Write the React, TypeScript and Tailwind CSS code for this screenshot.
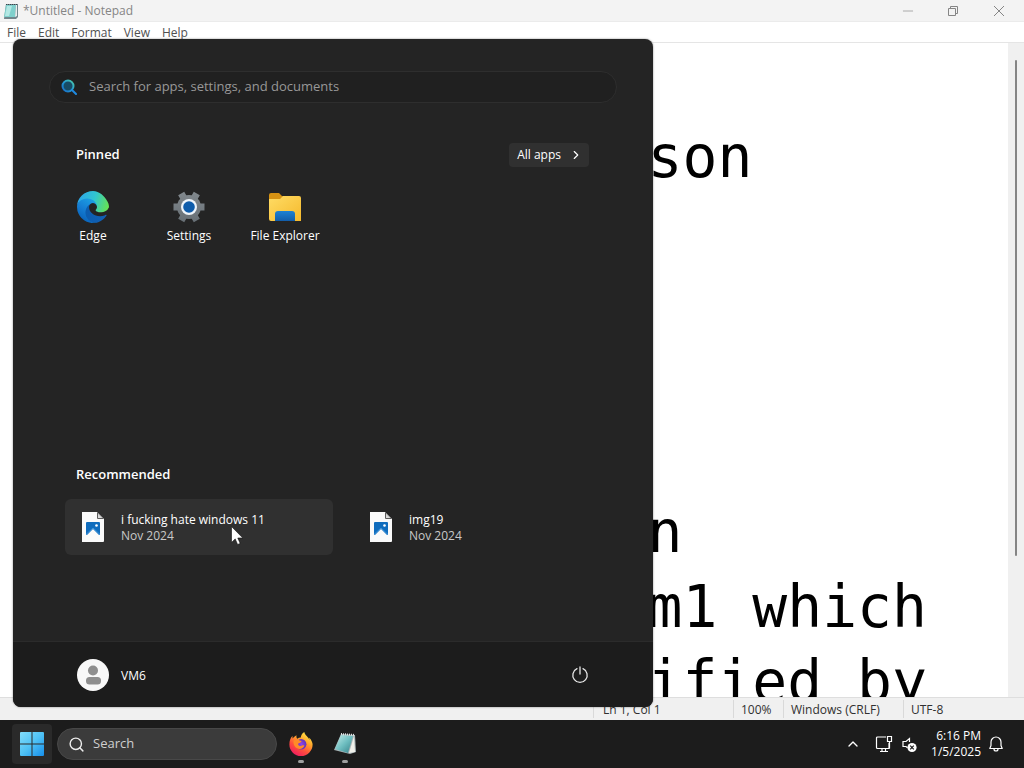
import { ChevronRight, ChevronUp, Minus, Search } from 'lucide-react';

const menus = ['File', 'Edit', 'Format', 'View', 'Help'];

const indent = ' '.repeat(18);
const note = ['', `${indent}son`, '', '', '', '', `${indent}n`, `${indent}m1 which`, `${indent}ified by`].join('\n');

const pinned = [
  { name: 'Edge', icon: EdgeIcon },
  { name: 'Settings', icon: SettingsIcon },
  { name: 'File Explorer', icon: FolderIcon },
];

const recommended = [
  { name: 'i fucking hate windows 11', date: 'Nov 2024', active: true },
  { name: 'img19', date: 'Nov 2024', active: false },
];

function EdgeIcon() {
  return (
    <svg viewBox="4.6 4.9 256 256" className="size-8">
      <defs>
        <linearGradient id="edge-dark" x1="63" y1="178" x2="241" y2="178" gradientUnits="userSpaceOnUse">
          <stop offset="0" stopColor="#0b5cae" />
          <stop offset="1" stopColor="#1260b4" />
        </linearGradient>
        <linearGradient id="edge-blue" x1="140" y1="90" x2="50" y2="230" gradientUnits="userSpaceOnUse">
          <stop offset="0" stopColor="#1b9de2" />
          <stop offset="0.5" stopColor="#1680d5" />
          <stop offset="1" stopColor="#0a66bd" />
        </linearGradient>
        <linearGradient id="edge-green" x1="20" y1="60" x2="250" y2="135" gradientUnits="userSpaceOnUse">
          <stop offset="0" stopColor="#2da9e8" />
          <stop offset="0.5" stopColor="#31c6cf" />
          <stop offset="1" stopColor="#65e255" />
        </linearGradient>
      </defs>
      <path
        fill="url(#edge-dark)"
        d="M235.68 195.46a93.73 93.73 0 0 1-10.54 4.71 101.87 101.87 0 0 1-35.9 6.46c-47.32 0-88.54-32.55-88.54-74.32A31.48 31.48 0 0 1 117.13 105c-42.8 1.8-53.8 46.4-53.8 72.53 0 73.88 68.09 81.37 82.76 81.37 7.91 0 19.84-2.3 27-4.56l1.31-.44a128.34 128.34 0 0 0 66.6-52.8 4 4 0 0 0-5.32-5.64z"
      />
      <path
        fill="url(#edge-blue)"
        d="M110.34 246.34A79.2 79.2 0 0 1 87.6 225a80.72 80.72 0 0 1 29.53-120c3.12-1.47 8.45-4.13 15.54-4a32.35 32.35 0 0 1 25.69 13 31.88 31.88 0 0 1 6.36 18.66c0-.21 24.46-79.6-80-79.6-43.9 0-80 41.66-80 78.21a130.15 130.15 0 0 0 12.11 56 128 128 0 0 0 156.38 67.11 75.55 75.55 0 0 1-62.78-8z"
      />
      <path
        fill="url(#edge-green)"
        d="M156.94 153.78c-.81 1.05-3.3 2.5-3.3 5.66 0 2.61 1.7 5.12 4.72 7.23 14.38 10 41.49 8.68 41.56 8.68a59.56 59.56 0 0 0 30.27-8.35A61.38 61.38 0 0 0 260.63 133.9c.26-22.41-8-37.31-11.34-43.91-21.19-41.44-66.93-85.07-116.67-85.07a128 128 0 0 0-128 126.2c.48-36.54 36.8-66.05 80-66.05 3.5 0 23.46.34 42 10.07 16.34 8.58 24.9 18.94 30.85 29.21 6.18 10.67 7.28 24.15 7.28 29.52s-2.74 13.4-7.8 19.91z"
      />
    </svg>
  );
}

function SettingsIcon() {
  return (
    <svg viewBox="0 0 32 32" className="size-8">
      <defs>
        <linearGradient id="gear" x1="0" y1="0" x2="0" y2="32" gradientUnits="userSpaceOnUse">
          <stop offset="0" stopColor="#82898e" />
          <stop offset="1" stopColor="#666e74" />
        </linearGradient>
      </defs>
      <g stroke="url(#gear)" strokeWidth="7">
        <path d="M.5 15.900L31.500 16.100M8.200 2.600l15.600 26.800M23.800 2.600L8.200 29.400" />
      </g>
      <circle cx="16" cy="16" r="12" fill="url(#gear)" />
      <circle cx="16" cy="16" r="8" fill="#eef4fa" />
      <circle cx="16" cy="16" r="5.800" fill="#0e5cab" />
    </svg>
  );
}

function FolderIcon() {
  return (
    <svg viewBox="0 0 32 32" className="size-8">
      <defs>
        <linearGradient id="folder" x1="0" y1="0" x2="1" y2="1">
          <stop offset="0" stopColor="#ffdc65" />
          <stop offset="1" stopColor="#f5b92c" />
        </linearGradient>
        <linearGradient id="folder-dock" x1="0" y1="0" x2="0" y2="1">
          <stop offset="0" stopColor="#1c82d4" />
          <stop offset="1" stopColor="#125da9" />
        </linearGradient>
      </defs>
      <path d="M0 10V4a2 2 0 0 1 2-2h8l3 3h1l-1 5z" fill="#d69213" />
      <path d="M0 8h11l3-3h16a2 2 0 0 1 2 2v23H2a2 2 0 0 1-2-2z" fill="url(#folder)" />
      <path d="M6 30v-7a3 3 0 0 1 3-3h14a3 3 0 0 1 3 3v7z" fill="url(#folder-dock)" />
    </svg>
  );
}

function ImageFileIcon() {
  return (
    <svg viewBox="0 0 24 30" className="h-[30px] w-6 shrink-0">
      <path d="M1 0h15l7 7v22a1 1 0 0 1-1 1H1z" fill="#fafafa" />
      <path d="M16 0v6a1 1 0 0 0 1 1h6z" fill="#5b5b5b" />
      <path d="M17 1.500v4.500h4.500z" fill="#d8d8d8" />
      <rect x="5" y="10" width="14" height="13" rx="1" fill="#0f6cbd" />
      <path d="M6 23l6-6 6 6z" fill="#fafafa" />
      <path d="M5 22.500l7-6.500 7 6.500" fill="none" stroke="#3d94dc" strokeWidth="1" />
      <circle cx="15.500" cy="13.500" r="1.300" fill="#fff" />
    </svg>
  );
}

function NotepadIcon() {
  return (
    <svg viewBox="0 0 24 24" className="size-6">
      <defs>
        <linearGradient id="pad" x1="0" y1="0" x2="1" y2="1">
          <stop offset="0" stopColor="#c4ece9" />
          <stop offset="0.5" stopColor="#6fbfc1" />
          <stop offset="1" stopColor="#357f88" />
        </linearGradient>
      </defs>
      <path d="M8 2l14 1 1 17-6 2-16-4z" fill="#a9b4b6" />
      <path d="M8 3l12 1-5 17-13-4z" fill="url(#pad)" />
      <path d="M21 4l1 16-6 1z" fill="#f0f0ea" />
      <path d="M8 2l14 1" stroke="#dfe5e6" strokeWidth="2" strokeDasharray="1 1" />
    </svg>
  );
}

function NotepadSmallIcon() {
  return (
    <svg viewBox="0 0 16 16" className="size-4">
      <path d="M3 1h12v13l-2 2H1z" fill="#71868c" />
      <path d="M3 2h10l-1 12H1z" fill="#7fd0cc" />
      <path d="M4 3h5L6 13H2z" fill="#b3e8e4" />
      <path d="M13 2h1v11l-2 1z" fill="#e8eeee" />
      <path d="M3 1.500h12" stroke="#39464c" strokeWidth="1" strokeDasharray="1 1" />
    </svg>
  );
}

function FirefoxIcon() {
  return (
    <svg viewBox="0 0 24 24" className="size-6">
      <defs>
        <linearGradient id="fox" x1="0.8" y1="0" x2="0.2" y2="1">
          <stop offset="0" stopColor="#fff04a" />
          <stop offset="0.35" stopColor="#ffa42b" />
          <stop offset="0.65" stopColor="#ff4f3c" />
          <stop offset="1" stopColor="#ee1565" />
        </linearGradient>
        <radialGradient id="fox-globe">
          <stop offset="0" stopColor="#8d46ee" />
          <stop offset="1" stopColor="#6333b9" />
        </radialGradient>
      </defs>
      <path
        d="M22.800 9.500c-.6-1.700-2-3.400-3.100-4 .6 1 .9 2 1 2.800-1.400-3.600-4.800-4.800-5.400-8.300-2.700 1.500-3.400 4-3.500 5.500-1.300.1-2.500.5-3.500 1.200-1-.9-1-2.600-.8-3.500-1.600.8-2.900 2-3.700 3.300-.4-.6-.4-2-.2-2.700C1.400 5.600.4 9 .4 12.500a11.600 11.500 0 0 0 23.200 0c0-1-.3-2.100-.8-3z"
        fill="url(#fox)"
      />
      <circle cx="12.200" cy="12.300" r="5.200" fill="url(#fox-globe)" />
      <path d="M4.500 9c1.300-1.700 3.500-2 5-1.300 1 .6 1.600 1 3.100 1.200-.3 1.600-1.800 1.800-2.900 2.300-.9.500-.6 1.700.2 2.300 2.500 1.500 3.500-1 5.500.1-1 2.700-3.500 4-6.200 3.200-3.100-.9-5-4-4.700-7.800z" fill="#ff8b27" />
    </svg>
  );
}

function MenuSearchIcon() {
  return (
    <svg viewBox="0 0 16 16" className="size-4" fill="none" strokeWidth="2">
      <defs>
        <linearGradient id="lens" x1="0" y1="1" x2="1" y2="0">
          <stop offset="0" stopColor="#1769c5" />
          <stop offset="0.5" stopColor="#239bd5" />
          <stop offset="1" stopColor="#4dc7a3" />
        </linearGradient>
      </defs>
      <circle cx="7" cy="7" r="5.500" stroke="url(#lens)" fill="#174b65" />
      <path d="M11 11l4 4" stroke="#1f8ae0" strokeLinecap="round" />
    </svg>
  );
}

function StartIcon() {
  return (
    <svg viewBox="0 0 24 24" className="size-6">
      <defs>
        <linearGradient id="win" x1="0" y1="0" x2="24" y2="24" gradientUnits="userSpaceOnUse">
          <stop offset="0" stopColor="#82dcf9" />
          <stop offset="0.5" stopColor="#4fc2f5" />
          <stop offset="1" stopColor="#168eea" />
        </linearGradient>
      </defs>
      <path d="M1 0h10.500v11.500H0V1a1 1 0 0 1 1-1zM12.500 0H23a1 1 0 0 1 1 1v10.500H12.500zM0 12.500h11.500V24H1a1 1 0 0 1-1-1zM12.500 12.500H24V23a1 1 0 0 1-1 1H12.500z" fill="url(#win)" />
    </svg>
  );
}

function Cursor() {
  return (
    <svg viewBox="0 0 12 19" className="absolute left-[166px] top-[27px] h-[19px] w-3">
      <path d="M.5.500v16l3.700-3.600 2.400 5.600 2.600-1.100-2.400-5.400h5z" fill="#fff" stroke="#111" strokeWidth=".6" />
    </svg>
  );
}

function Notepad() {
  return (
    <main className="flex min-h-0 flex-1 flex-col bg-white text-xs">
      <header className="flex h-[22px] shrink-0 items-center border-b border-[#ebebeb] bg-[#f3f3f3] pl-[3px] pr-[2px] text-[#858585]">
        <NotepadSmallIcon />
        <h1 className="ml-1 flex-1 pt-px">*Untitled - Notepad</h1>
        <button aria-label="Minimize" className="flex h-5 w-[45px] items-center justify-center">
          <Minus className="size-4" strokeWidth={1} />
        </button>
        <button aria-label="Restore" className="flex h-5 w-[45px] items-center justify-center">
          <svg viewBox="0 0 12 12" className="size-3" fill="none" stroke="currentColor">
            <path d="M1.500 3.500h7v7h-7zM3.500 3V1.500h7v7H9" />
          </svg>
        </button>
        <button aria-label="Close" className="flex h-5 w-[47px] items-center justify-center">
          <svg viewBox="0 0 12 12" className="size-3" fill="none" stroke="currentColor">
            <path d="M1 1l10 10M11 1L1 11" />
          </svg>
        </button>
      </header>
      <nav className="flex h-[21px] shrink-0 items-center gap-3 border-b border-[#e5e5e5] pl-[7px] pt-[2px] text-[#505050]">
        {menus.map((menu) => (
          <button key={menu}>{menu}</button>
        ))}
      </nav>

      <div className="flex min-h-0 flex-1">
        <textarea
          aria-label="Document"
          spellCheck={false}
          defaultValue={note}
          className="block min-w-0 flex-1 resize-none overflow-hidden whitespace-pre pl-[19px] pt-[2px] font-['DejaVu_Sans_Mono',monospace] text-[58px] leading-[75px] text-black outline-none"
        />
        <div className="flex w-4 justify-center bg-[#f0f0f0] pb-[141px] pt-[17px]">
          <div className="w-[2px] rounded-full bg-[#858585]" />
        </div>
      </div>

      <footer className="flex h-[23px] shrink-0 items-center justify-end border-t border-[#dedede] bg-[#f0f0f0] text-[#303030]">
        <span className="w-[140px] border-l border-[#d9d9d9] pl-[9px] pt-[2px]">Ln 1, Col 1</span>
        <span className="w-[50px] border-l border-[#d9d9d9] pl-[7px] pt-[2px]">100%</span>
        <span className="w-[120px] border-l border-[#d9d9d9] pl-[7px] pt-[2px]">Windows (CRLF)</span>
        <span className="w-[121px] border-l border-[#d9d9d9] pl-[7px] pt-[2px]">UTF-8</span>
      </footer>
    </main>
  );
}

function StartMenu() {
  return (
    <section
      aria-label="Start"
      className="absolute bottom-[61px] left-[13px] flex h-[668px] w-[640px] flex-col overflow-hidden rounded-lg bg-[#242424] text-xs text-white shadow-[0_0_2px_#00000080]"
    >
      <label className="mx-9 mt-8 flex h-8 items-center gap-3 rounded-full border border-[#2e2e2e] bg-[#202020] pl-[11px]">
        <MenuSearchIcon />
        <input
          type="search"
          placeholder="Search for apps, settings, and documents"
          aria-label="Search for apps, settings, and documents"
          className="min-w-0 flex-1 bg-transparent text-[13px] outline-none placeholder:text-[#989898]"
        />
      </label>

      <div className="mt-10 flex h-6 items-center justify-between pl-[63px] pr-16">
        <h2 className="text-[13px] font-semibold">Pinned</h2>
        <button className="flex h-6 items-center gap-2 rounded bg-[#303030] pl-2 pr-[6px]">
          All apps
          <ChevronRight className="size-[14px]" strokeWidth={2} />
        </button>
      </div>
      <div className="ml-8 mt-6 flex items-start">
        {pinned.map(({ name, icon: Icon }) => (
          <button key={name} className="flex w-24 flex-col items-center gap-[5px]">
            <Icon />
            {name}
          </button>
        ))}
      </div>

      <div className="mb-[86px] mt-auto">
        <h2 className="pl-[63px] text-[13px] font-semibold leading-5">Recommended</h2>
        <div className="mt-[15px] grid grid-cols-2 gap-5 px-[52px] pr-8">
          {recommended.map((file) => (
            <button
              key={file.name}
              className={`relative flex h-14 items-center gap-4 rounded-md pl-4 text-left leading-4 ${file.active ? 'bg-[#303030]' : ''}`}
            >
              <ImageFileIcon />
              <span className="pt-[2px]">
                <span className="block">{file.name}</span>
                <span className="block text-[#c8c8c8]">{file.date}</span>
              </span>
              {file.active && <Cursor />}
            </button>
          ))}
        </div>
      </div>

      <div className="flex h-[66px] shrink-0 items-center justify-between border-t border-[#2b2b2b] bg-[#1c1c1c] px-16">
        <button className="flex items-center gap-3">
          <svg viewBox="0 0 32 32" className="size-8">
            <circle cx="16" cy="16" r="16" fill="#f8f8f8" />
            <circle cx="16" cy="11.500" r="5" fill="#8e8e8e" />
            <rect x="9" y="18" width="15" height="7.500" rx="3.500" fill="#8e8e8e" />
          </svg>
          <span className="pt-[2px]">VM6</span>
        </button>
        <button aria-label="Power">
          <svg viewBox="0 0 18 18" className="size-[18px]" fill="none" stroke="#e8e8e8" strokeWidth="1.3" strokeLinecap="round">
            <path d="M9 1v7M6 2.700a7.200 7.200 0 1 0 6 0" />
          </svg>
        </button>
      </div>
    </section>
  );
}

function Taskbar() {
  return (
    <footer className="flex h-12 shrink-0 items-center bg-[#1c1c1c] pl-3 pr-[21px] text-white">
      <button aria-label="Start" className="flex size-10 items-center justify-center rounded bg-[#2a2a2a]">
        <StartIcon />
      </button>
      <label className="ml-[5px] flex h-8 w-[220px] items-center gap-2 rounded-full border border-[#484848] bg-[#3b3b3b] pl-[10px]">
        <Search className="size-[17px] text-[#eeeeee]" strokeWidth={2} />
        <input
          type="search"
          placeholder="Search"
          aria-label="Search"
          className="min-w-0 flex-1 bg-transparent text-[13px] outline-none placeholder:text-[#cfcfcf]"
        />
      </label>
      <button aria-label="Firefox" className="ml-1 flex size-10 flex-col items-center justify-end gap-1 pb-px">
        <FirefoxIcon />
        <span className="h-[3px] w-[6px] rounded-full bg-[#a0a0a0]" />
      </button>
      <button aria-label="Notepad" className="ml-1 flex size-10 flex-col items-center justify-end gap-1 pb-px">
        <NotepadIcon />
        <span className="h-[3px] w-[6px] rounded-full bg-[#a0a0a0]" />
      </button>

      <div className="ml-auto flex items-center">
        <button aria-label="Show hidden icons">
          <ChevronUp className="size-4" strokeWidth={2} />
        </button>
        <button aria-label="Network and volume" className="ml-[14px] mr-[2px] flex gap-2">
          <svg viewBox="0 0 18 18" className="size-[18px]" fill="none" stroke="currentColor" strokeWidth="1.2">
            <path d="M11 2H2.500a1 1 0 0 0-1 1v9.500a1 1 0 0 0 1 1H14V8M5 16.500h8M7 13.500v3M10.500 13.500v3M12.500 1.500h4v5h-4zM14.500 6.500v7" />
          </svg>
          <svg viewBox="0 0 18 18" className="size-[18px]" fill="none" stroke="currentColor" strokeWidth="1.2">
            <path d="M8.500 7V3.500L5 6.500H2v5h3l1.500 1.300" />
            <circle cx="11" cy="12.500" r="4.600" fill="#fff" stroke="none" />
            <path d="M9.200 10.700l3.600 3.600M12.800 10.700l-3.600 3.600" stroke="#1c1c1c" />
          </svg>
        </button>
        <time className="ml-[10px] text-right text-xs leading-4">
          6:16 PM
          <br />
          1/5/2025
        </time>
        <button aria-label="Notifications" className="ml-2">
          <svg viewBox="0 0 14 16" className="h-4 w-[14px]" fill="none" stroke="currentColor" strokeWidth="1.2" strokeLinejoin="round">
            <path d="M7 1a5 5 0 0 0-5 5v3.500L.800 12.500h12.400L12 9.500V6a5 5 0 0 0-5-5zM5 13a2 2 0 0 0 4 0" />
          </svg>
        </button>
      </div>
    </footer>
  );
}

export default function App() {
  return (
    <div className="relative flex h-screen flex-col overflow-hidden font-['Open_Sans','Noto_Sans',sans-serif]">
      <Notepad />
      <StartMenu />
      <Taskbar />
    </div>
  );
}
